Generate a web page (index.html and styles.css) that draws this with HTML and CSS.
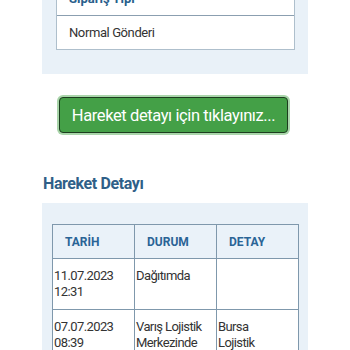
FILE: index.html
```html
<!DOCTYPE html>
<html lang="tr">
<head>
<meta charset="utf-8">
<link rel="stylesheet" href="styles.css">
</head>
<body>
<div class="page">
  <div class="card card-top">
    <div class="info-box">
      <div class="info-label">Sipariş Tipi</div>
      <div class="info-value">Normal Gönderi</div>
    </div>
  </div>
  <div class="btn-wrap">
    <button class="btn">Hareket detayı için tıklayınız...</button>
  </div>
  <h2 class="section-title">Hareket Detayı</h2>
  <div class="card card-table">
    <table class="moves">
      <thead>
        <tr><th>TARİH</th><th>DURUM</th><th>DETAY</th></tr>
      </thead>
      <tbody>
        <tr><td>11.07.2023<br>12:31</td><td>Dağıtımda</td><td></td></tr>
        <tr><td>07.07.2023<br>08:39</td><td>Varış Lojistik<br>Merkezinde</td><td>Bursa<br>Lojistik</td></tr>
      </tbody>
    </table>
  </div>
</div>
</body>
</html>
```
FILE: styles.css
```css
html, body {
  margin: 0;
  padding: 0;
  background: #ffffff;
  font-family: Roboto, "Liberation Sans", sans-serif;
  overflow: hidden;
}
.page {
  width: 350px;
}
.card {
  margin-left: 42px;
  width: 266px;
  background: #e9f1f8;
  box-sizing: border-box;
}
.card-top {
  margin-top: -36px;
  padding: 14px 13px 24px 14px;
}
.info-box {
  background: #fff;
  border: 1px solid #aebfcc;
}
.info-label {
  padding: 12px 12px 9px;
  font-size: 13px;
  line-height: 15px;
  font-weight: 700;
  color: #2a5f8c;
  border-bottom: 1px solid #8b9fb0;
}
.info-value {
  padding: 9px 12px 9px;
  font-size: 13px;
  letter-spacing: -0.4px;
  line-height: 15px;
  color: #333;
}
.btn-wrap {
  display: flex;
  justify-content: center;
  margin-top: 23px;
}
.btn {
  width: 229px;
  height: 36px;
  background: #44a047;
  border: 1px solid #1d3d1f;
  border-radius: 4px;
  box-shadow: 0 0 0 2px #a9d5aa;
  color: #fff;
  font-family: Roboto, "Liberation Sans", sans-serif;
  font-size: 16.5px;
  letter-spacing: -0.4px;
  white-space: nowrap;
  padding: 0;
  margin-left: -3px;
}
.section-title {
  margin: 41px 0 0 43px;
  font-size: 16px;
  letter-spacing: -0.4px;
  line-height: 20px;
  font-weight: 700;
  color: #2f5f88;
}
.card-table {
  margin-top: 9px;
  padding: 21px 9px 0 10px;
}
.moves {
  width: 247px;
  border-collapse: collapse;
  table-layout: fixed;
  background: #fff;
}
.moves th, .moves td {
  border: 1px solid #7f98ac;
  vertical-align: top;
  text-align: left;
}
.moves th {
  background: #eaf2f9;
  color: #2a6496;
  font-size: 12px;
  font-weight: 700;
  height: 34px;
  padding: 0 0 0 12px;
  vertical-align: middle;
  box-sizing: border-box;
}
.moves td {
  font-size: 13px;
  letter-spacing: -0.6px;
  line-height: 16px;
  color: #333;
  padding: 9px 1px 9px 1px;
}
```
